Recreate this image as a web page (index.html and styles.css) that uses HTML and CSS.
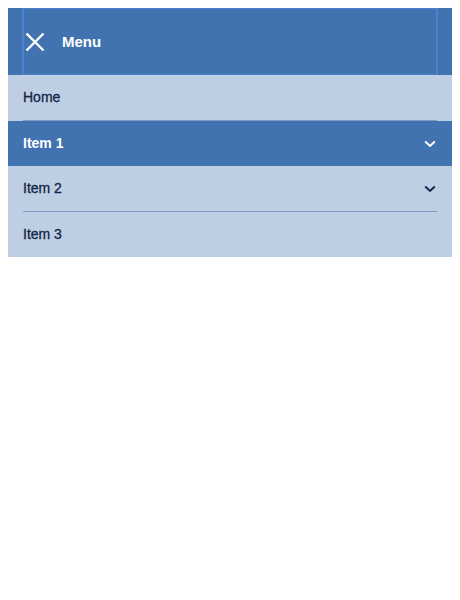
FILE: index.html
```html
<!DOCTYPE html>
<html>
<head>
<meta charset="utf-8">
<link rel="stylesheet" href="styles.css">
</head>
<body>
<nav class="nav">
  <div class="nav-head">
    <div class="nav-head-inner">
      <svg class="close" width="20" height="20" viewBox="0 0 20 20"><path d="M1.5 1.5 L18.5 18.5 M18.5 1.5 L1.5 18.5" stroke="#fff" stroke-width="2.4" fill="none"/></svg>
      <span class="title">Menu</span>
    </div>
  </div>
  <ul class="list">
    <li class="row"><div class="row-inner sep"><span class="label">Home</span></div></li>
    <li class="row active"><div class="row-inner"><span class="label">Item 1</span><svg class="chev" width="12" height="8" viewBox="0 0 12 8"><path d="M1.2 1.5 L6 6 L10.8 1.5" stroke="#fff" stroke-width="2" fill="none"/></svg></div></li>
    <li class="row"><div class="row-inner sep"><span class="label">Item 2</span><svg class="chev" width="12" height="8" viewBox="0 0 12 8"><path d="M1.2 1.5 L6 6 L10.8 1.5" stroke="#14284d" stroke-width="2" fill="none"/></svg></div></li>
    <li class="row"><div class="row-inner"><span class="label">Item 3</span></div></li>
  </ul>
</nav>
</body>
</html>
```
FILE: styles.css
```css
html, body {
  margin: 0;
  padding: 0;
  background: #ffffff;
}
body {
  padding: 8px;
  font-family: "Liberation Sans", Arial, sans-serif;
}
.nav {
  background: #bfcfe3;
}
.nav-head {
  background: #4173b1;
  height: 67px;
  padding: 0 14px;
}
.nav-head-inner {
  box-sizing: border-box;
  height: 67px;
  border-left: 2px solid #4a82d2;
  border-right: 2px solid #4a82d2;
  border-top: 1px solid #4a82d2;
  border-bottom: 1px solid #4a82d2;
  display: flex;
  align-items: center;
  padding-left: 1px;
}
.close {
  display: block;
  margin-right: 17px;
}
.title {
  color: #ffffff;
  font-weight: bold;
  font-size: 15px;
}
.list {
  list-style: none;
  margin: 0;
  padding: 0;
}
.row {
  padding: 0 15px;
  color: #132548;
  font-size: 14px;
}
.label {
  -webkit-text-stroke: 0.3px #132548;
  margin-bottom: 2px;
}
.row.active {
  background: #4173b1;
  color: #ffffff;
  font-weight: bold;
}
.row.active .label {
  -webkit-text-stroke: 0;
}
.row-inner {
  height: 45px;
  display: flex;
  align-items: center;
  justify-content: space-between;
}
.row-inner.sep {
  border-bottom: 1px solid #7f9cc6;
}
.chev {
  display: block;
  margin-right: 1px;
}
```
